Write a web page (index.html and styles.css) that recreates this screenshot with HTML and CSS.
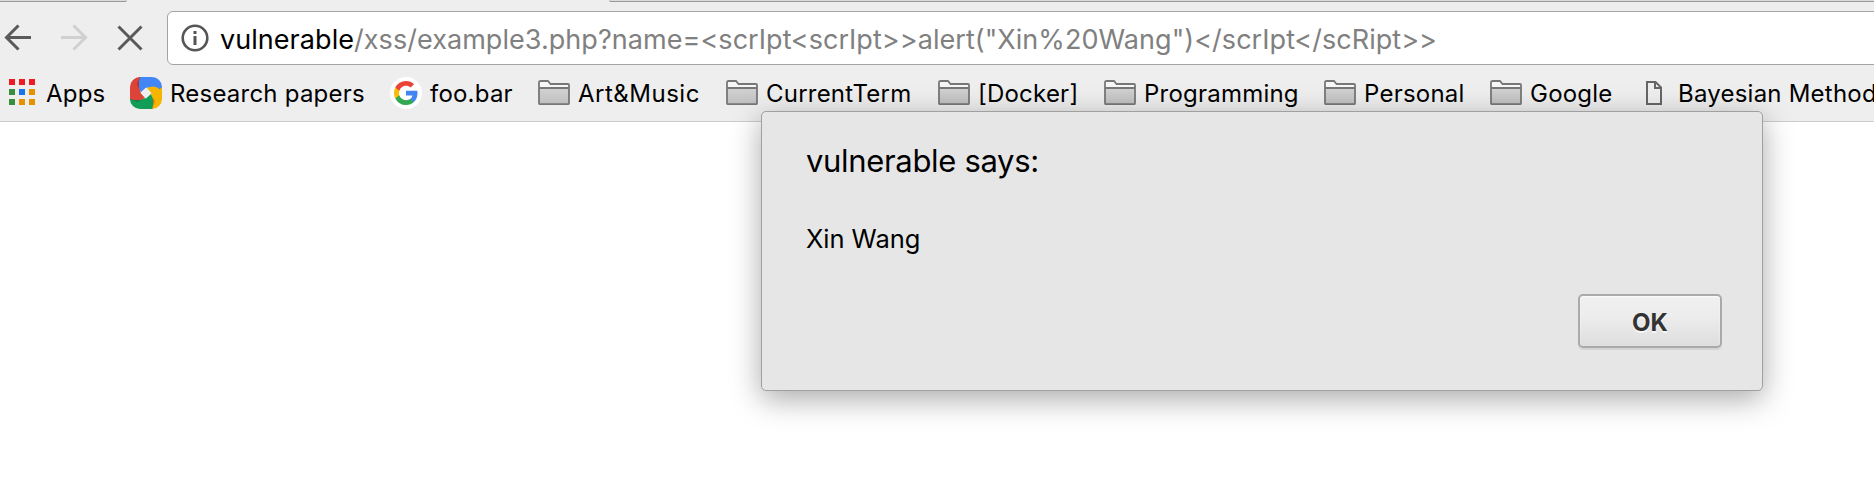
FILE: index.html
```html
<!DOCTYPE html>
<html lang="en">
<head>
<meta charset="utf-8">
<title>vulnerable</title>
<link rel="stylesheet" href="styles.css">
</head>
<body>
<svg class="defs" width="0" height="0" aria-hidden="true">
  <defs>
    <linearGradient id="fill" x1="0" y1="0" x2="0" y2="1"><stop offset="0" stop-color="#d2d2d2"/><stop offset="1" stop-color="#c0c0c0"/></linearGradient>
    <symbol id="folder" viewBox="0 0 32 26">
      <path d="M1 8V2.5Q1 1 2.500 1H10L12.500 4H30Q31 4 31 5V8Z" fill="#f6f6f6"/>
      <path d="M1 8H31V23.500Q31 24.200 30 24.200H2Q1 24.200 1 23.500Z" fill="url(#fill)"/>
      <path d="M1 8V2.500Q1 1 2.500 1H10L12.500 4H30Q31 4 31 5V23.200Q31 24.200 30 24.200H2Q1 24.200 1 23.200ZM1 8H31" fill="none" stroke="#777" stroke-width="1.800"/>
    </symbol>
    <clipPath id="round"><rect width="32" height="32" rx="10"/></clipPath>
    <path id="petal" d="M0 0H16Q8 4 10 12L11 16L15 21Q9 25 0 22Z"/>
    <path id="tuck" d="M9 0H16Q9 3 9 11Q6 8 8 5Q10 2 9 0Z"/>
  </defs>
</svg>
<div class="browser">
  <header class="chrome">
    <div class="tabs"><div class="tab tab-left"></div><div class="tab tab-right"></div></div>
    <div class="toolbar">
      <svg class="nav" width="167" height="55" viewBox="0 0 167 55" fill="none" stroke="#5a5a5a" stroke-width="3">
        <path d="M31 26.500H7M18.500 14.500L6.500 26.500L18.500 38.500"/>
        <path stroke="#d0d0d0" d="M61 26.500H85M73.500 14.500L85.500 26.500L73.500 38.500"/>
        <path d="M118.500 15.500L141.500 38.500M141.500 15.500L118.500 38.500"/>
      </svg>
      <div class="address">
        <svg class="info" width="28" height="28" viewBox="0 0 28 28"><circle cx="14" cy="14" r="12.300" fill="none" stroke="#555" stroke-width="2.600"/><path d="M12.500 7h3v3h-3zM12.500 12h3v9h-3z" fill="#555"/></svg>
        <span class="host">vulnerable</span><span class="path">/xss/example3.php?name=&lt;scrIpt&lt;scrIpt&gt;&gt;alert("Xin%20Wang")&lt;/scrIpt&lt;/scRipt&gt;&gt;</span>
      </div>
    </div>
    <nav class="bookmarks">
      <a class="mark apps"><svg width="26" height="26" viewBox="0 0 26 26"><path fill="#ed1c24" d="M0 0h6v6H0zM10 0h6v6h-6zM20 0h6v6h-6z"/><path fill="#388e3c" d="M0 10h6v6H0zM0 20h6v6H0z"/><path fill="#1a73f0" d="M10 10h6v6h-6z"/><path fill="#e69100" d="M20 10h6v6h-6zM10 20h6v6h-6zM20 20h6v6h-6z"/></svg><span>Apps</span></a>
      <a class="mark research"><svg width="32" height="32" viewBox="0 0 32 32"><g clip-path="url(#round)">
        <use href="#petal" fill="#f4b400" transform="rotate(180 16 16)"/>
        <use href="#tuck" fill="#ef7c00" transform="rotate(180 16 16)"/>
        <use href="#petal" fill="#0f9d58" transform="rotate(270 16 16)"/>
        <use href="#tuck" fill="#087f45" transform="rotate(270 16 16)"/>
        <use href="#petal" fill="#db4437"/>
        <use href="#tuck" fill="#a93226"/>
        <use href="#petal" fill="#4285f4" transform="rotate(90 16 16)"/>
        <path fill="#f4b400" d="M21 15Q27 16 32 10V21H23L21 17Z"/>
        <path fill="#eee" d="M16 10.500L21.500 16L16 21.500L10.500 16Z"/>
      </g></svg><span>Research papers</span></a>
      <a class="mark foo"><svg width="32" height="32" viewBox="0 0 32 32"><circle cx="16" cy="16" r="16" fill="#fff"/><g transform="translate(4 4)"><path fill="#4285f4" d="M23.500 12.270c0-.850-.080-1.660-.220-2.440H12v4.620h6.450a5.520 5.520 0 0 1-2.390 3.620v3h3.870c2.260-2.090 3.570-5.160 3.570-8.800z"/><path fill="#34a853" d="M12 24c3.240 0 5.950-1.070 7.930-2.910l-3.870-3c-1.070.720-2.450 1.150-4.060 1.150-3.120 0-5.770-2.110-6.710-4.950H1.290v3.100A12 12 0 0 0 12 24z"/><path fill="#fbbc05" d="M5.290 14.290a7.200 7.200 0 0 1 0-4.580v-3.100h-4a12 12 0 0 0 0 10.780z"/><path fill="#ea4335" d="M12 4.770c1.760 0 3.340.610 4.590 1.800l3.430-3.440C17.950 1.190 15.240 0 12 0A12 12 0 0 0 1.290 6.610l4 3.100C6.230 6.880 8.880 4.770 12 4.770z"/></g></svg><span>foo.bar</span></a>
      <a class="mark"><svg class="folder"><use href="#folder"/></svg><span class="art">Art&amp;Music</span></a>
      <a class="mark"><svg class="folder"><use href="#folder"/></svg><span>CurrentTerm</span></a>
      <a class="mark"><svg class="folder"><use href="#folder"/></svg><span>[Docker]</span></a>
      <a class="mark"><svg class="folder"><use href="#folder"/></svg><span>Programming</span></a>
      <a class="mark"><svg class="folder"><use href="#folder"/></svg><span>Personal</span></a>
      <a class="mark"><svg class="folder"><use href="#folder"/></svg><span>Google</span></a>
      <a class="mark doc"><svg width="16" height="24" viewBox="0 0 16 24" fill="none" stroke="#666" stroke-width="2"><path d="M1 1H9.500L15 6.500V23H1ZM9 1V7H15"/></svg><span>Bayesian Methods</span></a>
    </nav>
  </header>
  <section class="dialog" role="dialog">
    <h1 class="title">vulnerable says:</h1>
    <p class="message">Xin Wang</p>
    <button class="ok">OK</button>
  </section>
</div>
</body>
</html>
```
FILE: styles.css
```css
* { box-sizing: border-box; }
body { margin: 0; background: #fff; font-family: Inter, "Liberation Sans", sans-serif; color: #000; }
.defs { position: absolute; }
.browser { position: relative; width: 1874px; height: 498px; overflow: hidden; }
.chrome { height: 122px; background: #eee; border-bottom: 1px solid #ccc; }
.tabs { display: flex; justify-content: space-between; height: 11px; }
.tab { height: 2px; background: #dcdcdc; border-bottom: 1px solid #999; }
.tab-left { width: 127px; border-bottom-right-radius: 2px; }
.tab-right { width: 1265px; border-bottom-left-radius: 2px; }
.toolbar { display: flex; height: 54px; }
.nav { flex: none; }
.address { flex: none; display: flex; align-items: center; width: 1720px; height: 54px; padding-left: 13px; background: #fff; border: 1px solid #a3a3a3; border-radius: 6px; font-size: 27px; white-space: nowrap; }
.info { flex: none; margin-right: 11px; }
.host, .path { line-height: 32px; padding-top: 3px; letter-spacing: .05px; }
.path { color: #808080; }
.bookmarks { display: grid; grid-template-columns: 121px 260px 148px 188px 212px 166px 220px 166px 156px 300px; height: 56px; padding-left: 9px; font-size: 24px; line-height: 30px; letter-spacing: .22px; white-space: nowrap; }
.mark { display: flex; align-items: center; gap: 8px; height: 56px; }
.mark svg { flex: none; }
.mark span { padding-top: 1px; }
.mark .art { letter-spacing: .5px; }
.apps { gap: 11px; padding-bottom: 2px; }
.apps span { padding-top: 3px; }
.folder { width: 32px; height: 26px; }
.doc { gap: 16px; }
.dialog { position: absolute; left: 761px; top: 111px; width: 1002px; height: 280px; padding: 30px 40px 42px 44px; display: flex; flex-direction: column; background: #e6e6e6; border: 1px solid #a0a0a0; border-radius: 5px; box-shadow: 0 8px 30px rgba(0,0,0,.34); }
.title { margin: 0; font-size: 31px; font-weight: 400; line-height: 38px; letter-spacing: -.33px; }
.message { margin: 44px 0 0; font-size: 25.500px; line-height: 30px; letter-spacing: -.05px; }
.ok { align-self: flex-end; margin-top: auto; width: 144px; height: 54px; padding: 2px 0 0; border: 2px solid #aaa; border-radius: 5px; background: linear-gradient(#f0f0f0, #ededed 38%, #dedede); box-shadow: 0 2px 0 rgba(0,0,0,.08), inset 0 1px 2px rgba(255,255,255,.8); color: #333; font: 700 24px Inter, "Liberation Sans", sans-serif; text-shadow: 0 2px 0 #f5f5f5; }
```
